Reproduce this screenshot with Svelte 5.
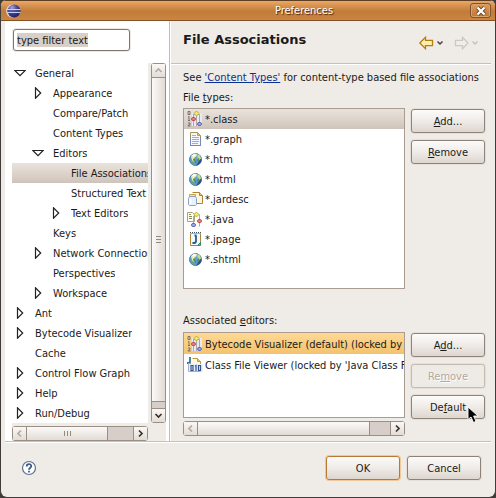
<script>
  const tree = [
    { label: 'General', level: 0, state: 'open' },
    { label: 'Appearance', level: 1, state: 'closed' },
    { label: 'Compare/Patch', level: 1 },
    { label: 'Content Types', level: 1 },
    { label: 'Editors', level: 1, state: 'open' },
    { label: 'File Associations', level: 2 },
    { label: 'Structured Text Editors', level: 2 },
    { label: 'Text Editors', level: 2, state: 'closed' },
    { label: 'Keys', level: 1 },
    { label: 'Network Connections', level: 1, state: 'closed' },
    { label: 'Perspectives', level: 1 },
    { label: 'Workspace', level: 1, state: 'closed' },
    { label: 'Ant', level: 0, state: 'closed' },
    { label: 'Bytecode Visualizer', level: 0, state: 'closed' },
    { label: 'Cache', level: 0 },
    { label: 'Control Flow Graph', level: 0, state: 'closed' },
    { label: 'Help', level: 0, state: 'closed' },
    { label: 'Run/Debug', level: 0, state: 'closed' }
  ];
  const types = [
    ['*.class', 'class'], ['*.graph', 'page'], ['*.htm', 'globe'], ['*.html', 'globe'],
    ['*.jardesc', 'jar'], ['*.java', 'java'], ['*.jpage', 'jpage'], ['*.shtml', 'globe']
  ];
  const editors = [
    ["Bytecode Visualizer (default) (locked by 'Java", 'class'],
    ["Class File Viewer (locked by 'Java Class File", 'viewer']
  ];
  let selectedPage = $state('File Associations');
  let selectedType = $state(0);
  let selectedEditor = $state(0);
  let filter = $state('type filter text');
</script>

{#snippet icon(kind)}
  <svg class="icon" width="16" height="16" viewBox="0 0 16 16" aria-hidden="true">
    {#if kind === 'class'}
      <path d="M5 2h10v13H5z" fill="#e9e9f1" />
      <path d="M1 .5h2v3H1zM1 6l1-.5v4M1 9.500h2M1 12h2v1.500l-2 1V15h2.500" fill="none" stroke="#6b6662" stroke-width=".9" />
      <path d="M6.500 3v12M6.500 3.500h6v9M9.500 4v11" fill="none" stroke="#a49fa5" stroke-width=".9" />
      <path d="M9.500 0L12 2.500 9.500 5 7 2.500z" fill="#f5ee55" stroke="#aaa033" stroke-width=".8" />
      <rect x="4.500" y="6.500" width="4" height="3" rx="1.500" fill="#f0837c" stroke="#b2484c" stroke-width=".9" />
      <rect x="10.500" y="11.500" width="4" height="3" rx="1.500" fill="#9cabee" stroke="#5359a3" stroke-width=".9" />
    {:else if kind === 'page'}
      <path d="M3.500 1.500h7l3 3v10h-10z" fill="#f4f7ff" stroke="#a39558" />
      <path d="M3.500 14.500V7M13.500 6v8.500h-10" fill="none" stroke="#7587bb" />
      <path d="M10.500 1.500v3h3z" fill="#e5cf78" stroke="#b89d4c" />
      <path d="M5 4.500h4M5 6.500h7M5 8.500h7M5 10.500h7M5 12.500h6" stroke="#9cafdc" />
    {:else if kind === 'globe'}
      <circle cx="8.500" cy="8.500" r="6" fill="#4fa2dc" stroke="#557d94" />
      <path d="M9 14.500a6 6 0 0 0 5.500-6l-1.500-1-2 4z" fill="#2d4f8c" />
      <path d="M4 5l3-2.500 3 .5-.5 2.500-2 1 1.500 2-1.500 2.500-2-1-1-2.500z" fill="#e6ebb8" />
      <path d="M10.500 3l2.500 1.500 1 3-2 2-1.500-2z" fill="#cbd798" />
      <path d="M6 8l2-1 1 2-1 2-1.500-1zM11 7l1.500 1-1 3-1.500-1.500z" fill="#5c8a4d" />
      <path d="M5 5l2-2 2 1-2 1.500z" fill="#fff" />
      <path d="M4 11.500l2-.5 2.500 2L7 14z" fill="#73a55c" />
      <path d="M8 10h1.200v1.800H8z" fill="#c9402e" />
    {:else if kind === 'jar'}
      <path d="M5.500 1.500h7l3 3v8h-8" fill="#fff6dd" stroke="#af8230" />
      <path d="M12.500 1.500v3h3" fill="#ebc66e" stroke="#af8230" />
      <path d="M2.500 3.500h6v2h-6z" fill="#ffe394" stroke="#cfa24a" />
      <path d="M2.500 5.500h6l1 2v6l-1 1h-6l-1-1v-6z" fill="#e8f1ff" stroke="#8aa0c4" />
      <path d="M3.500 8v5" stroke="#fff" stroke-width="2" />
    {:else if kind === 'java'}
      <path d="M.5 1.500h5l2 2v7h-7z" fill="#fdfcf2" stroke="#a9a284" />
      <path d="M2 3.500h2M2 5.500h3M2 7.500h3" stroke="#8c895f" />
      <path d="M6.500 5v8M8 3.500h4.500M12.500 4v11.500" fill="none" stroke="#a49fa5" stroke-width=".9" />
      <path d="M9.500 1L12 3.500 9.500 6 7 3.500z" fill="#f5ee55" stroke="#aaa033" stroke-width=".8" />
      <rect x="10.500" y="8.500" width="4" height="3" rx="1.500" fill="#f0837c" stroke="#b2484c" stroke-width=".9" />
      <rect x="4.500" y="12.500" width="4" height="3" rx="1.500" fill="#a3b2ef" stroke="#5359a3" stroke-width=".9" />
    {:else if kind === 'jpage'}
      <path d="M3.500 2.500h10v9l-3 3h-7z" fill="#f1fafd" stroke="#b28334" />
      <path d="M3 1.500h11" stroke="#3a5470" stroke-dasharray="1 1" />
      <path d="M3 2.500h11" stroke="#9fb5c8" />
      <path d="M13.500 11v.5l-3 3h3z" fill="#78c484" stroke="#388a61" />
      <path d="M9 4.500v5.500q0 2-2 2H5.500M7.500 4.500h2" fill="none" stroke="#245c8c" stroke-width="1.800" />
    {:else}
      <path d="M5.500 1.500h5l3 3v9h-10V5" fill="#fff8df" stroke="#c39640" />
      <path d="M10.500 1.500v3h3" fill="#ebc66e" stroke="#c39640" />
      <path d="M3 0v4q0 2-2 2H0" fill="none" stroke="#2c76a5" stroke-width="1.800" />
      <path d="M2 7h14v8H2z" fill="#eaf0fa" />
      <path d="M4 8.500h2v5H4zM8 9l1-.5v5.500M11.500 8.500h2v5h-2z" fill="none" stroke="#33508f" stroke-width="1.200" />
      <path d="M1.500 6v8.500h12" fill="none" stroke="#a1afd0" />
    {/if}
  </svg>
{/snippet}

{#snippet arrow(dir, off)}
  <button class="step {dir}" class:off aria-label="Scroll {dir}">
    <svg width="9" height="9" viewBox="0 0 9 9" aria-hidden="true">
      <path d={{ up: 'M1.500 6L4.500 3l3 3', down: 'M1.500 3l3 3 3-3', left: 'M6 1.500L3 4.500l3 3', right: 'M3 1.500l3 3-3 3' }[dir]} fill="none" stroke="currentColor" stroke-width="1.700" />
    </svg>
  </button>
{/snippet}

<div class="window">
  <header class="titlebar">
    <svg class="logo" width="16" height="14" viewBox="0 0 16 14" aria-hidden="true">
      <defs>
        <radialGradient id="moon" cx=".35" cy=".25" r=".8">
          <stop offset="0" stop-color="#a7a2d6" /><stop offset=".5" stop-color="#464191" /><stop offset="1" stop-color="#211d5c" />
        </radialGradient>
      </defs>
      <ellipse cx="6" cy="7" rx="6" ry="6.500" fill="#ded0cc" />
      <ellipse cx="8" cy="7" rx="6.500" ry="6.500" fill="url(#moon)" />
      <path d="M1 5.500h13.500M1 8.500h13.500" stroke="#bdd5ee" />
      <path d="M1 7h13.500" stroke="#504b98" />
    </svg>
    <span class="caption">Preferences</span>
    <button class="close" aria-label="Close">
      <svg width="10" height="10" viewBox="0 0 10 10" aria-hidden="true">
        <path d="M1.500 1.500l7 7M8.500 1.500l-7 7" stroke="#63401f" stroke-width="4" />
        <path d="M1.500 1.500l7 7M8.500 1.500l-7 7" stroke="#fff" stroke-width="2.400" />
      </svg>
    </button>
  </header>

  <div class="main">
    <nav class="side">
      <input class="filter" aria-label="Filter" bind:value={filter} />
      <div class="treebox">
        <div class="tree" role="tree" aria-label="Preference pages">
          {#each tree as item}
            <div
              class="node level{item.level}"
              class:selected={item.label === selectedPage}
              role="treeitem"
              tabindex="-1"
              aria-selected={item.label === selectedPage}
              aria-expanded={item.state ? item.state === 'open' : undefined}
              onclick={() => (selectedPage = item.label)}
              onkeydown={(e) => e.key === 'Enter' && (selectedPage = item.label)}
            >
              <span class="twist">
                {#if item.state}
                  <svg width="12" height="12" viewBox="0 0 12 12" aria-hidden="true">
                    <path d={item.state === 'open' ? 'M.8 3.500h10.400L6 8.700z' : 'M3.500.8v10.400L8.700 6z'} fill="#fff" stroke="#222" stroke-width="1.200" />
                  </svg>
                {/if}
              </span>
              <span class="text">{item.label}</span>
            </div>
          {/each}
        </div>
        <div class="scroll vertical">
          {@render arrow('up', true)}
          <div class="thumb"><i></i><i></i><i></i></div>
          <div class="gap"></div>
          {@render arrow('down', false)}
        </div>
        <div class="scroll horizontal">
          {@render arrow('left', true)}
          <div class="thumb"><i></i><i></i><i></i></div>
          <div class="gap"></div>
          {@render arrow('right', false)}
        </div>
      </div>
    </nav>

    <main class="page">
      <div class="heading">
        <h1>File Associations</h1>
        <div class="history">
          <button aria-label="Back">
            <svg width="26" height="14" viewBox="0 0 26 14" aria-hidden="true">
              <path d="M.8 7L6.500 1.300v3h7v5.400h-7v3z" fill="#fff0ad" stroke="#b57d14" stroke-width="1.300" />
              <path d="M18.500 5.500l2.500 2.500 2.500-2.500" fill="none" stroke="#444" stroke-width="1.500" />
            </svg>
          </button>
          <button aria-label="Forward" disabled>
            <svg width="26" height="14" viewBox="0 0 26 14" aria-hidden="true">
              <path d="M14 7L8.500 1.300v3h-7v5.400h7v3z" fill="#f0ede9" stroke="#cbc7c1" stroke-width="1.300" />
              <path d="M18.500 5.500l2.500 2.500 2.500-2.500" fill="none" stroke="#c5c1bc" stroke-width="1.500" />
            </svg>
          </button>
        </div>
      </div>

      <div class="content">
        <p>See <a href="#content-types">'Content Types'</a> for content-type based file associations</p>
        <h2 id="types-label">File <u>t</u>ypes:</h2>
        <div class="section">
          <ul class="list types" role="listbox" aria-labelledby="types-label">
            {#each types as [name, kind], i}
              <li
                role="option"
                tabindex="-1"
                class:selected={i === selectedType}
                aria-selected={i === selectedType}
                onclick={() => (selectedType = i)}
                onkeydown={(e) => e.key === 'Enter' && (selectedType = i)}
              >{@render icon(kind)}<span class="text">{name}</span></li>
            {/each}
          </ul>
          <div class="actions">
            <button class="btn"><span><u>A</u>dd...</span></button>
            <button class="btn"><span><u>R</u>emove</span></button>
          </div>
        </div>

        <h2 id="editors-label" class="second">Associated <u>e</u>ditors:</h2>
        <div class="section">
          <div class="listwrap">
            <ul class="list editors" role="listbox" aria-labelledby="editors-label">
              {#each editors as [name, kind], i}
                <li
                  role="option"
                  tabindex="-1"
                  class:focused={i === selectedEditor}
                  aria-selected={i === selectedEditor}
                  onclick={() => (selectedEditor = i)}
                  onkeydown={(e) => e.key === 'Enter' && (selectedEditor = i)}
                >{@render icon(kind)}<span class="text">{name}</span></li>
              {/each}
            </ul>
            <div class="scroll horizontal">
              {@render arrow('left', true)}
              <div class="thumb"></div>
              <div class="gap"></div>
              {@render arrow('right', false)}
            </div>
          </div>
          <div class="actions">
            <button class="btn"><span>A<u>d</u>d...</span></button>
            <button class="btn" disabled><span>Re<u>m</u>ove</span></button>
            <div class="hovered">
              <button class="btn"><span>De<u>f</u>ault</span></button>
              <svg class="pointer" width="12" height="18" viewBox="0 0 12 18" aria-hidden="true">
                <path d="M1 1v12.500l3-2.500 2.500 5.500 2.500-1.200L6.600 10H11z" fill="#000" stroke="#fff" stroke-width=".9" />
              </svg>
            </div>
          </div>
        </div>
      </div>
    </main>
  </div>

  <footer>
    <button class="help" aria-label="Help">
      <svg width="16" height="16" viewBox="0 0 16 16" aria-hidden="true">
        <circle cx="8" cy="8" r="6.500" fill="#fff" stroke="#58718f" stroke-width="1.200" />
        <path d="M5.700 6.500c0-3 4.600-3 4.600-.4C10.300 7.700 8 7.700 8 9.700M8 10.800v1.800" fill="none" stroke="#3f5c80" stroke-width="1.800" />
      </svg>
    </button>
    <button class="btn primary">OK</button>
    <button class="btn">Cancel</button>
  </footer>
</div>

<style>
  :global(body) { margin: 0; background: #3f3c38; }
  .window, .window * { box-sizing: border-box; }
  .window {
    display: flex;
    flex-direction: column;
    min-height: 100vh;
    border: 1px solid #403c39;
    border-top: 0;
    border-radius: 6px 6px 7px 7px;
    overflow: hidden;
    background: #efebe6;
    color: #1b1a19;
    font: 11px/20px "DejaVu Sans Condensed", "DejaVu Sans", sans-serif;
  }
  button, input { font: inherit; color: inherit; margin: 0; padding: 0; }
  .titlebar {
    display: flex;
    align-items: center;
    justify-content: space-between;
    height: 21px;
    padding: 0 4px 0 5px;
    border-top: 1px solid #603e21;
    border-bottom: 1px solid #845025;
    background: linear-gradient(#eaa766, #d8924f 25%, #c27c3a 55%, #c98541);
  }
  .caption {
    flex: 1;
    padding-left: 116px;
    text-align: center;
    color: #fff;
    line-height: 18px;
    text-shadow: 1px 1px 1px #49250c;
  }
  .close {
    display: grid;
    place-items: center;
    width: 21px;
    height: 15px;
    border: 1px solid #80512a;
    border-radius: 3px;
    background: linear-gradient(#dc9b5c, #bd7639);
    box-shadow: inset 0 0 0 1px #dba46f;
  }
  .main {
    flex: 1;
    display: grid;
    grid-template-columns: 165px minmax(0, 1fr);
    margin: 0 4px;
    border-bottom: 1px solid #c8bfb6;
    box-shadow: 0 1px #fff;
  }
  .side {
    display: flex;
    flex-direction: column;
    gap: 12px;
    padding: 8px 3px 0 7px;
    background: #fff;
    border-right: 1px solid #c5bcb3;
  }
  .filter {
    width: 117px;
    height: 22px;
    margin-left: 1px;
    padding: 0 3px;
    border: 1px solid #81766b;
    border-radius: 3px;
    outline: 0;
    box-shadow: 0 0 0 1px #eee9e3;
    background: linear-gradient(#d8cfc8, #d8cfc8) 3px 3px / 71px 14px no-repeat #fff;
  }
  .treebox {
    flex: 1;
    display: grid;
    grid-template: minmax(0, 1fr) 15px / minmax(0, 1fr) 15px;
    gap: 3px;
    background: #efebe6;
  }
  .tree { overflow: hidden; background: #fff; }
  .node { display: flex; height: 20px; white-space: nowrap; }
  .level1 { padding-left: 18px; }
  .level2 { padding-left: 36px; }
  .text { min-width: 0; overflow: hidden; line-height: 22px; height: 20px; }
  .twist { flex: none; display: flex; align-items: center; width: 23px; padding-left: 2px; }
  .selected { background: linear-gradient(#e9e2dc, #ddd4cc 50%, #cfc4bb); }
  .scroll { display: flex; min-width: 0; background: #d8cec9; border: 1px solid #9a8f85; border-radius: 3px; }
  .horizontal { height: 15px; }
  .vertical { flex-direction: column; }
  .step {
    flex: none;
    display: grid;
    place-items: center;
    width: 13px;
    height: 13px;
    border: 0;
    background: linear-gradient(#faf8f6, #e3dcd6);
    color: #38322d;
  }
  .step.off { color: #b5aaa0; }
  .thumb {
    flex: 1;
    display: flex;
    gap: 2px;
    align-items: center;
    justify-content: center;
    background: linear-gradient(#fbfaf9, #e2dbd5);
    border: 0 solid #9a8f85;
  }
  .horizontal .thumb { border-width: 0 1px; }
  .vertical .thumb { flex-direction: column; border-width: 1px 0; background: linear-gradient(90deg, #fbfaf9, #e2dbd5); }
  .thumb i { width: 1px; height: 5px; background: #93897f; }
  .vertical .thumb i { width: 5px; height: 1px; }
  .gap { flex: none; }
  .vertical .gap { height: 7px; border-bottom: 1px solid #9a8f85; }
  .horizontal .gap { width: 26px; border-right: 1px solid #9a8f85; }
  .listwrap .gap { width: 21px; }
  .page { border-left: 1px solid #fff; }
  .heading {
    display: flex;
    align-items: center;
    justify-content: space-between;
    height: 43px;
    padding: 0 11px 4px 12px;
    border-bottom: 1px solid #c8bfb6;
    box-shadow: 0 1px #fff;
  }
  h1 { margin: 0; font: bold 13px/20px "DejaVu Sans", sans-serif; }
  .history { display: flex; gap: 9px; padding-top: 6px; }
  .history button { display: flex; border: 0; background: none; }
  .content { padding: 4px 6px 4px 12px; }
  p, h2 { margin: 0; font: inherit; white-space: nowrap; }
  a { color: #0b3091; }
  u { text-underline-offset: 1px; }
  .section { display: grid; grid-template-columns: minmax(0, 1fr) 74px; gap: 6px; }
  .list { margin: 0; padding: 0; list-style: none; background: #fff; border: 1px solid #aa9c90; overflow: hidden; }
  .types { height: 181px; }
  .editors { height: 86px; }
  li { display: flex; align-items: center; gap: 2px; height: 20px; padding-left: 3px; white-space: nowrap; }
  .editors li { height: 21px; }
  .icon { flex: none; }
  .focused { background: linear-gradient(#ffd995, #f2c26e); }
  .second { margin-top: 22px; }
  .second + .section { margin-top: 1px; }
  .listwrap { display: flex; flex-direction: column; gap: 3px; min-width: 0; }
  .actions { display: flex; flex-direction: column; gap: 7px; padding-top: 1px; }
  .btn {
    width: 74px;
    height: 24px;
    padding-top: 1px;
    border: 1px solid #8e8379;
    border-radius: 3px;
    background: linear-gradient(#fcfbfa, #efebe8 50%, #ded6cf);
    box-shadow: 0 0 0 1px #e6dfd8;
    line-height: 20px;
  }
  .btn:disabled { color: #b3a79b; border-color: #c5bbb1; background: #eeeae5; text-shadow: 1px 1px #fff; }
  .hovered { position: relative; height: 24px; }
  .pointer { position: absolute; left: 56px; top: 11px; }
  footer { display: flex; align-items: center; gap: 7px; height: 55px; padding: 0 14px 3px 20px; }
  .help { display: flex; margin-right: auto; border: 0; background: none; }
  .primary { border-color: #ba7835; box-shadow: 0 0 0 1px #f1c798; }
</style>
